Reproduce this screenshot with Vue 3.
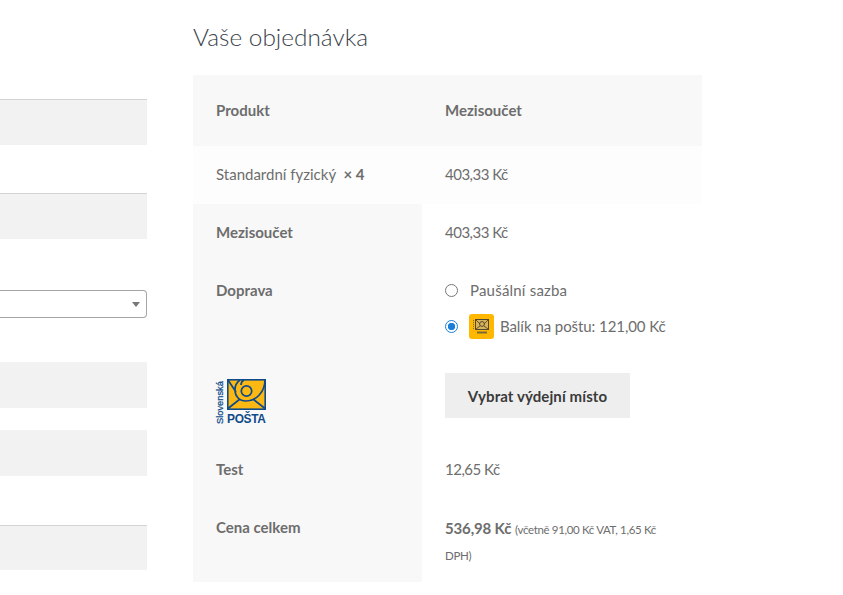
<script setup>
const gaps = [
  { type: 'field', mt: 99 },
  { type: 'field', mt: 48 },
  { type: 'select', mt: 51 },
  { type: 'plain', mt: 44 },
  { type: 'plain', mt: 22 },
  { type: 'field last', mt: 49 },
]
</script>

<template>
  <div class="page">
    <div class="left">
      <div
        v-for="(g, i) in gaps"
        :key="i"
        :class="g.type"
        :style="{ marginTop: g.mt + 'px' }"
      >
        <span v-if="g.type === 'select'" class="arrow"></span>
      </div>
    </div>
    <div class="right">
      <h3 class="title">Vaše objednávka</h3>
      <table class="order">
        <thead>
          <tr class="head">
            <th class="c1">Produkt</th>
            <th class="c2">Mezisoučet</th>
          </tr>
        </thead>
        <tbody>
          <tr class="item">
            <td class="c1">Standardní fyzický&nbsp; <strong>× 4</strong></td>
            <td class="c2"><span class="price">403,33 Kč</span></td>
          </tr>
        </tbody>
        <tfoot>
          <tr class="r58">
            <th class="c1">Mezisoučet</th>
            <td class="c2"><span class="price">403,33 Kč</span></td>
          </tr>
          <tr class="ship">
            <th class="c1">Doprava</th>
            <td class="c2">
              <div class="opt">
                <span class="radio"></span>
                <span class="opt-label flat">Paušální sazba</span>
              </div>
              <div class="opt opt2">
                <span class="radio on"></span>
                <span class="mini">
                  <svg width="19" height="19" viewBox="0 0 19 19">
                    <rect x="3.5" y="2.5" width="13" height="10" fill="#d9b35c" stroke="#4f4730" stroke-width="1" />
                    <path d="M4 3l4 4M16 3l-4 4M4 12l4-3M16 12l-4-3" stroke="#4f4730" stroke-width=".9" fill="none" />
                    <circle cx="10" cy="7" r="2.4" fill="none" stroke="#4f4730" stroke-width="1" />
                    <path d="M1.5 3v10" stroke="#7a6a34" stroke-width="1" stroke-dasharray="1 1" fill="none" />
                    <rect x="5" y="14.5" width="10" height="2" fill="#7a6a34" />
                  </svg>
                </span>
                <span class="opt-label tight">Balík na poštu: 121,00 Kč</span>
              </div>
            </td>
          </tr>
          <tr class="pick">
            <th class="c1">
              <div class="logo">
                <span class="logo-side">Slovenská</span>
                <div class="logo-main">
                  <svg class="env" width="39" height="31" viewBox="0 0 39 31">
                    <rect x=".8" y=".8" width="37.4" height="29.4" fill="#fdb913" stroke="#0f4a8a" stroke-width="1.6" />
                    <path d="M1 29.5L13 20M38 29.5L26 20M1 1l8 12M38 1C38 13 29 22 19 22 12 22 8 17 8 11 8 6 10 3 13 1M17 1c-2 1-3 3-3 5" fill="none" stroke="#0f4a8a" stroke-width="1.7" />
                    <circle cx="19.5" cy="12" r="5.2" fill="none" stroke="#0f4a8a" stroke-width="1.7" />
                  </svg>
                  <span class="logo-word">POŠTA</span>
                </div>
              </div>
            </th>
            <td class="c2"><button class="pick-btn" type="button">Vybrat výdejní místo</button></td>
          </tr>
          <tr class="r58">
            <th class="c1">Test</th>
            <td class="c2"><span class="price">12,65 Kč</span></td>
          </tr>
          <tr class="total">
            <th class="c1">Cena celkem</th>
            <td class="c2"><strong class="sum">536,98 Kč</strong> <small class="tax">(včetně 91,00 Kč VAT, 1,65 Kč DPH)</small></td>
          </tr>
        </tfoot>
      </table>
    </div>
  </div>
</template>

<style scoped>
.page {
  display: flex;
  width: 843px;
  height: 595px;
  overflow: hidden;
  background: #fff;
  font-family: "Lato", "Noto Sans", sans-serif;
  color: #6d6d6d;
  font-size: 15px;
}
.left {
  width: 147px;
  flex: none;
}
.field {
  height: 46px;
  box-sizing: border-box;
  background: #f2f2f2;
  border-top: 1px solid #d3d3d3;
}
.field.last {
  height: 45px;
}
.plain {
  height: 46px;
  background: #f2f2f2;
}
.select {
  position: relative;
  height: 28px;
  box-sizing: border-box;
  border: 1px solid #a5a5a5;
  border-left: 0;
  border-radius: 0 4px 4px 0;
  background: #fff;
}
.arrow {
  position: absolute;
  right: 6px;
  top: 11px;
  border-left: 4px solid transparent;
  border-right: 4px solid transparent;
  border-top: 5px solid #777;
}
.right {
  margin-left: 46px;
  width: 509px;
  flex: none;
}
.title {
  margin: 0;
  height: 75px;
  box-sizing: border-box;
  padding-top: 20px;
  font-size: 24.4px;
  line-height: 34px;
  font-weight: 300;
  color: #3c434c;
}
.order {
  width: 509px;
  table-layout: fixed;
  border-collapse: collapse;
}
.order th,
.order td {
  padding: 0;
  text-align: left;
  vertical-align: top;
  box-sizing: border-box;
}
.order .c1 {
  width: 229px;
  padding-left: 23px;
  background: #f8f8f8;
  font-weight: 700;
}
.order .c2 {
  padding-left: 23px;
  padding-right: 23px;
  font-weight: 400;
}
.order .head th {
  height: 71px;
  padding-bottom: 2px;
  vertical-align: middle;
  background: #f8f8f8;
  font-weight: 700;
}
.order .item td {
  height: 58px;
  padding-bottom: 2px;
  vertical-align: middle;
  background: #fdfdfd;
  font-weight: 400;
}
.order .r58 th,
.order .r58 td {
  height: 58px;
  padding-bottom: 2px;
  vertical-align: middle;
}
.order .ship th,
.order .ship td {
  height: 88px;
  padding-top: 18px;
}
.order .ship th {
  padding-top: 19px;
}
.opt {
  display: flex;
  align-items: center;
  height: 20px;
}
.opt2 {
  margin-top: 16px;
}
.radio {
  width: 13px;
  height: 13px;
  box-sizing: border-box;
  flex: none;
  border: 1px solid #767676;
  border-radius: 50%;
  background: #fff;
  margin-right: 12px;
}
.radio.on {
  border: 1.5px solid #1a7fdb;
  background: radial-gradient(circle, #1a7fdb 0 3.4px, #fff 4px);
  margin-right: 11px;
}
.mini {
  width: 25px;
  height: 25px;
  flex: none;
  border-radius: 3px;
  background: #ffb700;
  display: flex;
  align-items: center;
  justify-content: center;
  margin-right: 6px;
}
.flat {
  letter-spacing: .2px;
}
.tight {
  letter-spacing: -.08px;
}
.price {
  letter-spacing: -.5px;
}
.order .pick th,
.order .pick td {
  height: 91px;
  vertical-align: top;
}
.order .pick th {
  padding-top: 29px;
}
.order .pick td {
  padding-top: 23px;
}
.logo {
  display: flex;
  align-items: flex-start;
  gap: 3px;
  height: 45px;
}
.logo-side {
  writing-mode: vertical-rl;
  transform: rotate(180deg);
  font-family: "Liberation Sans", sans-serif;
  font-size: 9.3px;
  line-height: 8px;
  font-weight: 400;
  color: #0f4a8a;
  height: 45px;
  text-align: left;
  white-space: nowrap;
  -webkit-text-stroke: .25px #0f4a8a;
}
.logo-main {
  display: flex;
  flex-direction: column;
  width: 39px;
}
.env {
  display: block;
}
.logo-word {
  margin-top: 2px;
  font-family: "Liberation Sans", sans-serif;
  font-size: 11.9px;
  line-height: 14px;
  font-weight: 700;
  color: #0f4a8a;
  letter-spacing: -.3px;
  white-space: nowrap;
}
.pick-btn {
  display: block;
  width: 185px;
  height: 45px;
  border: 0;
  background: #eeeeee;
  color: #3a3a3a;
  font-family: inherit;
  font-size: 15px;
  font-weight: 700;
  letter-spacing: .1px;
  padding: 0;
}
.order .total th,
.order .total td {
  height: 83px;
}
.order .total th {
  padding-top: 19px;
}
.order .total td {
  padding-top: 16px;
  line-height: 26px;
}
.sum {
  font-weight: 700;
  letter-spacing: -.15px;
}
.tax {
  font-size: 11.5px;
  line-height: 1;
  letter-spacing: -.35px;
}
</style>
